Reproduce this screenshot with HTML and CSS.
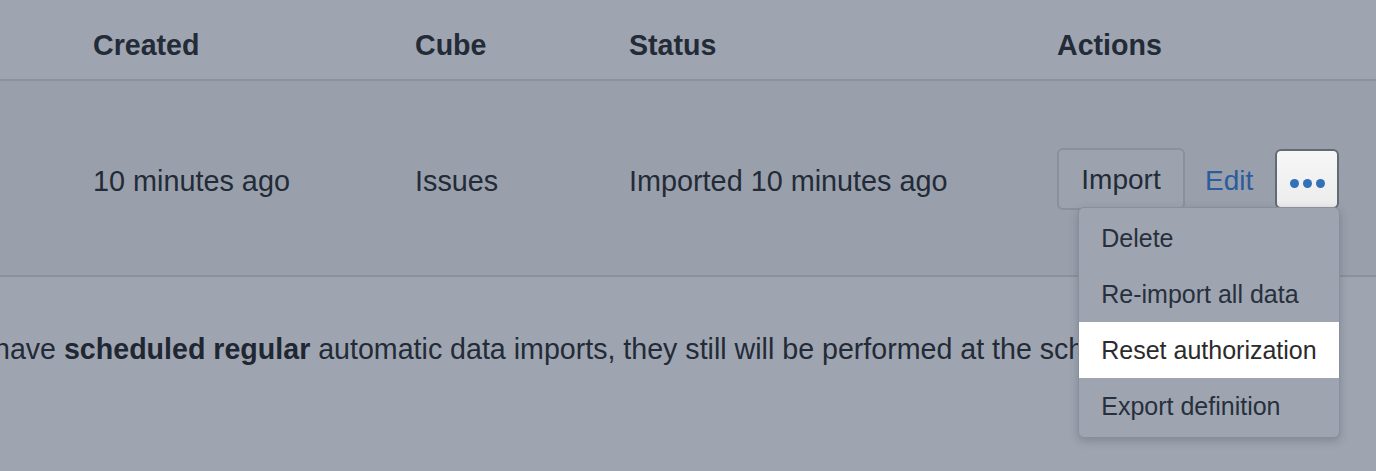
FILE: index.html
```html
<!DOCTYPE html>
<html lang="en">
<head>
<meta charset="utf-8">
<title>Imports</title>
<link rel="stylesheet" href="styles.css">
</head>
<body>
<div class="page">
  <div class="table">
    <div class="row head">
      <div class="cell"></div>
      <div class="cell">Created</div>
      <div class="cell">Cube</div>
      <div class="cell">Status</div>
      <div class="cell">Actions</div>
    </div>
    <div class="row body-row">
      <div class="cell"></div>
      <div class="cell text">10 minutes ago</div>
      <div class="cell text">Issues</div>
      <div class="cell text">Imported 10 minutes ago</div>
      <div class="cell actions">
        <button class="btn">Import</button>
        <a class="link">Edit</a>
        <div class="more-wrap">
          <button class="more"><span class="dot"></span><span class="dot"></span><span class="dot"></span></button>
          <ul class="menu">
            <li>Delete</li>
            <li>Re-import all data</li>
            <li class="active">Reset authorization</li>
            <li>Export definition</li>
          </ul>
        </div>
      </div>
    </div>
  </div>
  <p class="note">have <b>scheduled regular</b> automatic data imports, they still will be performed at the scheduled time.</p>
</div>
</body>
</html>
```
FILE: styles.css
```css
html, body {
  margin: 0;
  padding: 0;
}
body {
  background: #9ea5b1;
  font-family: "Liberation Sans", Arial, sans-serif;
  color: #232b37;
  width: 1376px;
  height: 471px;
  overflow: hidden;
}
.page {
  width: 1376px;
}
.row {
  display: grid;
  grid-template-columns: 93px 322px 214px 428px 319px;
  align-items: center;
  border-bottom: 2px solid #8b929e;
}
.head {
  height: 81px;
  font-weight: bold;
  font-size: 28.6px;
  padding-top: 11px;
  box-sizing: border-box;
}
.body-row {
  height: 196px;
  background: #99a0ac;
  font-size: 28.8px;
  box-sizing: border-box;
}
.cell {
  white-space: nowrap;
}
.text {
  padding-top: 6px;
}
.actions {
  display: flex;
  align-items: center;
  padding-top: 2px;
}
.btn {
  font-family: inherit;
  font-size: 28px;
  color: #232b37;
  background: #9ca3af;
  border: 2px solid #8a919d;
  border-radius: 6px;
  width: 128px;
  height: 62px;
  padding: 2px 0 0;
  box-sizing: border-box;
}
.link {
  color: #2c5c9d;
  font-size: 28px;
  margin-left: 20px;
  margin-right: 22px;
  margin-top: 4px;
}
.more-wrap {
  position: relative;
}
.more {
  width: 64px;
  height: 60px;
  background: linear-gradient(#f7f7f7, #ececec);
  border: 2px solid #626a76;
  border-radius: 6px;
  padding: 8px 0 0 0;
  display: flex;
  align-items: center;
  justify-content: center;
  gap: 4px;
  box-sizing: border-box;
}
.dot {
  width: 9px;
  height: 9px;
  border-radius: 50%;
  background: #3270b7;
}
.menu {
  position: absolute;
  top: 58px;
  right: -1px;
  width: 262px;
  margin: 0;
  padding: 2px 0 3px;
  list-style: none;
  background: #9ea5b1;
  border: 1px solid #89909c;
  border-radius: 6px;
  box-shadow: 0 3px 8px rgba(40, 48, 60, 0.25);
  box-sizing: border-box;
  font-size: 25px;
  color: #27303c;
}
.menu li {
  height: 56px;
  line-height: 56px;
  padding-left: 22px;
  white-space: nowrap;
}
.menu li.active {
  background: #ffffff;
  color: #2b2b2b;
}
.note {
  margin: 56px 0 0 -6px;
  font-size: 28.6px;
  white-space: nowrap;
  color: #232b37;
}
.note b {
  color: #1f2733;
}
```
